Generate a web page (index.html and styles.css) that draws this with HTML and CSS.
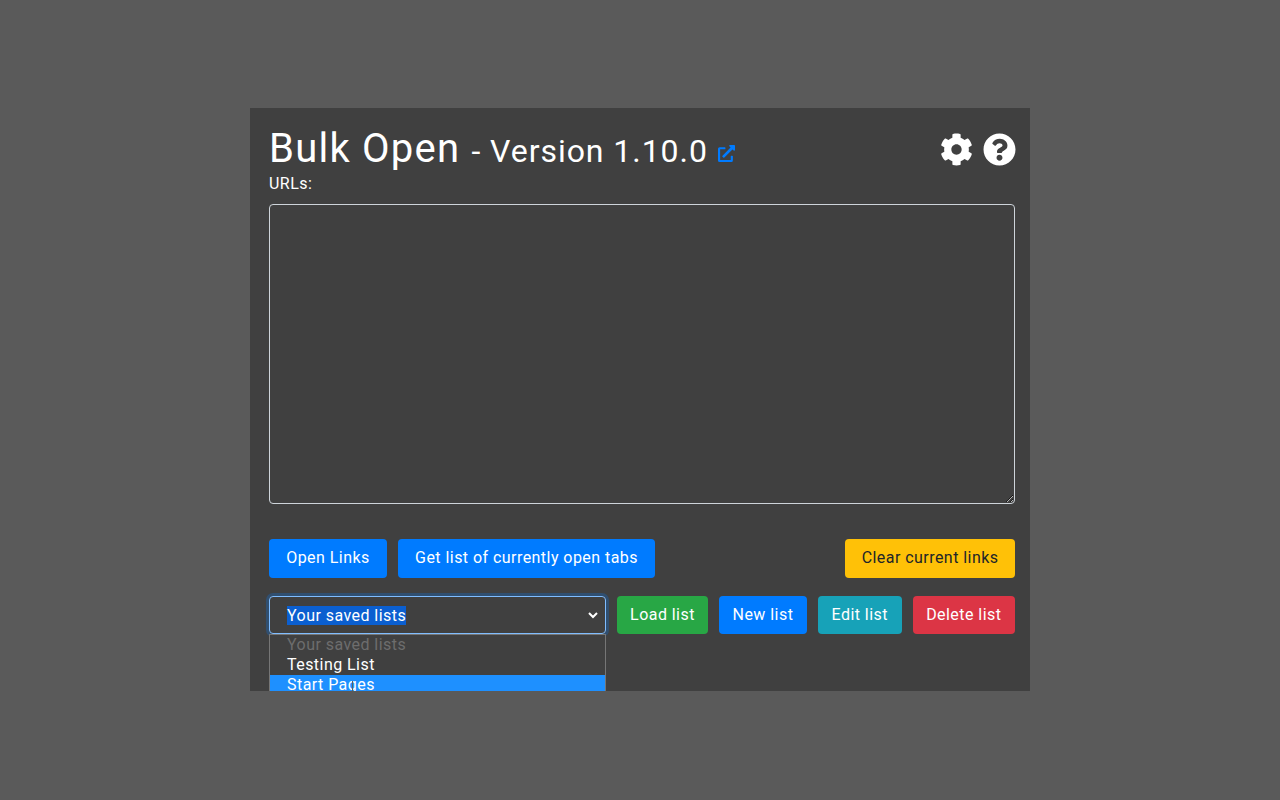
FILE: index.html
```html
<!DOCTYPE html>
<html lang="en">
<head>
<meta charset="utf-8">
<title>Bulk Open</title>
<link rel="stylesheet" href="styles.css">
</head>
<body>
<main class="panel">
  <header class="head">
    <h1 class="title">Bulk Open <small class="version">- Version 1.10.0</small>
      <svg class="ext" viewBox="0 0 512 512"><path d="M432,320H400a16,16,0,0,0-16,16V448H64V128H208a16,16,0,0,0,16-16V80a16,16,0,0,0-16-16H48A48,48,0,0,0,0,112V464a48,48,0,0,0,48,48H400a48,48,0,0,0,48-48V336A16,16,0,0,0,432,320ZM488,0h-128c-21.37,0-32.05,25.91-17,41l35.73,35.73L135,320.37a24,24,0,0,0,0,34L157.67,377a24,24,0,0,0,34,0L435.28,133.32,471,169c15,15,41,4.5,41-17V24A24,24,0,0,0,488,0Z"/></svg>
    </h1>
    <div class="head-icons">
      <svg class="icon" viewBox="0 0 512 512"><path d="M487.4 315.7l-42.6-24.6c4.3-23.2 4.3-47 0-70.2l42.6-24.6c4.9-2.8 7.1-8.6 5.5-14-11.1-35.6-30-67.8-54.7-94.6-3.8-4.1-10-5.1-14.8-2.3L380.8 110c-17.9-15.4-38.5-27.3-60.8-35.1V25.8c0-5.6-3.9-10.5-9.4-11.7-36.7-8.2-74.3-7.8-109.2 0-5.5 1.2-9.4 6.1-9.4 11.7V75c-22.2 7.9-42.8 19.8-60.8 35.1L88.7 85.5c-4.9-2.8-11-1.9-14.8 2.3-24.7 26.7-43.6 58.9-54.7 94.6-1.7 5.4.6 11.2 5.5 14L67.3 221c-4.3 23.2-4.3 47 0 70.2l-42.6 24.6c-4.9 2.8-7.1 8.6-5.5 14 11.1 35.6 30 67.8 54.7 94.6 3.8 4.1 10 5.1 14.8 2.3l42.6-24.6c17.9 15.4 38.5 27.3 60.8 35.1v49.2c0 5.6 3.9 10.5 9.4 11.7 36.7 8.2 74.3 7.8 109.2 0 5.5-1.2 9.4-6.1 9.4-11.7v-49.2c22.2-7.9 42.8-19.8 60.8-35.1l42.6 24.6c4.9 2.8 11 1.9 14.8-2.3 24.7-26.7 43.6-58.9 54.7-94.6 1.5-5.5-.7-11.3-5.6-14.1zM256 336c-44.1 0-80-35.9-80-80s35.9-80 80-80 80 35.9 80 80-35.9 80-80 80z"/></svg>
      <svg class="icon" viewBox="0 0 512 512"><path d="M504 256c0 136.997-111.043 248-248 248S8 392.997 8 256C8 119.083 119.043 8 256 8s248 111.083 248 248zM262.655 90c-54.497 0-89.255 22.957-116.549 63.758-3.536 5.286-2.353 12.415 2.715 16.258l34.699 26.31c5.205 3.947 12.621 3.008 16.665-2.122 17.864-22.658 30.113-35.797 57.303-35.797 20.429 0 45.698 13.148 45.698 32.958 0 14.976-12.363 22.667-32.534 33.976C247.128 238.528 216 254.941 216 296v4c0 6.627 5.373 12 12 12h56c6.627 0 12-5.373 12-12v-1.333c0-28.462 83.186-29.647 83.186-106.667 0-58.002-60.165-102-116.531-102zM256 338c-25.365 0-46 20.635-46 46 0 25.364 20.635 46 46 46s46-20.636 46-46c0-25.365-20.635-46-46-46z"/></svg>
    </div>
  </header>
  <label class="label" for="urls">URLs:</label>
  <textarea class="urls" id="urls"></textarea>
  <div class="row row-actions">
    <button class="btn blue action-btn">Open Links</button>
    <button class="btn blue action-btn">Get list of currently open tabs</button>
    <button class="btn yellow action-btn push">Clear current links</button>
  </div>
  <div class="row row-lists">
    <div class="select-wrap">
      <div class="select">
        <span class="selected">Your saved lists</span>
        <svg class="chev" viewBox="0 0 12 12"><path d="M2 4l4 4 4-4" fill="none" stroke="#fff" stroke-width="2"/></svg>
      </div>
      <ul class="menu">
        <li class="opt disabled">Your saved lists</li>
        <li class="opt">Testing List</li>
        <li class="opt active">Start Pages</li>
      </ul>
      <span class="cursor"></span>
    </div>
    <button class="btn green list-btn load-btn">Load list</button>
    <button class="btn blue list-btn">New list</button>
    <button class="btn teal list-btn">Edit list</button>
    <button class="btn red list-btn">Delete list</button>
  </div>
</main>
</body>
</html>
```

FILE: styles.css
```css
* { box-sizing: border-box; }
html, body { height: 100%; }
body {
  margin: 0;
  background: #5a5a5a;
  display: flex;
  align-items: flex-start;
  justify-content: center;
  padding-top: 108px;
  font-family: Roboto, "Liberation Sans", sans-serif;
  letter-spacing: .45px;
  color: #fff;
}
.panel {
  width: 780px;
  height: 583px;
  background: #404040;
  padding: 17px 14px 0 19px;
  overflow: hidden;
}
.head {
  display: flex;
  justify-content: space-between;
  align-items: flex-start;
}
.title {
  margin: 0;
  font-size: 40px;
  line-height: 48px;
  font-weight: 400;
  letter-spacing: 1.23px;
  white-space: nowrap;
}
.version { font-size: 32px; font-weight: 400; letter-spacing: .95px; }
.ext { width: 17px; height: 17px; fill: #007bff; margin-left: -1px; }
.head-icons { display: flex; gap: 10px; padding-top: 8px; }
.icon { width: 33px; height: 33px; fill: #fff; display: block; }
.label {
  display: block;
  font-size: 16px;
  line-height: 24px;
  font-weight: 400;
  margin-top: -3px;
}
.urls {
  display: block;
  width: 746px;
  height: 300px;
  margin-top: 8px;
  background: #404040;
  border: 1px solid #ced4da;
  border-radius: 4px;
  color: #fff;
  padding: 6px 12px;
}
.row { display: flex; width: 746px; }
.row-actions { margin-top: 35px; gap: 11px; }
.row-lists { margin-top: 18px; gap: 11px; }
.btn {
  height: 39px;
  border: 1px solid transparent;
  border-radius: 4px;
  font: 400 16px/24px Roboto, "Liberation Sans", sans-serif;
  letter-spacing: .45px;
  color: #fff;
  white-space: nowrap;
}
.action-btn { padding: 0 16.2px 2px; }
.push { margin-left: auto; padding: 0 15.5px 2px; }
.list-btn { height: 38px; padding: 0 12px; flex: 1 1 auto; }
.load-btn { padding: 0 11.5px; }
.blue { background: #007bff; }
.yellow { background: #ffc107; color: #212529; }
.green { background: #28a745; }
.teal { background: #17a2b8; }
.red { background: #dc3545; }
.select-wrap { position: relative; width: 337px; flex: none; }
.select {
  height: 38px;
  display: flex;
  align-items: center;
  justify-content: space-between;
  padding: 0 6px 0 17px;
  border: 1px solid #80bdff;
  border-radius: 4px;
  box-shadow: 0 0 0 3px rgba(0, 123, 255, .25);
  font-size: 16px;
}
.selected { background: #0b5fd0; line-height: 19px; }
.chev { width: 12px; height: 12px; }
.menu {
  position: absolute;
  top: 38px;
  left: 0;
  width: 337px;
  margin: 0;
  padding: 0;
  list-style: none;
  background: #404040;
  border: 1px solid #767676;
  font-size: 16px;
}
.opt { height: 20px; line-height: 20px; padding-left: 17px; }
.disabled { color: #6d6d6d; }
.active { background: #1e90ff; }
.cursor {
  position: absolute;
  top: 85px;
  left: 83px;
  width: 1px;
  height: 12px;
  background: #55606b;
}
```
